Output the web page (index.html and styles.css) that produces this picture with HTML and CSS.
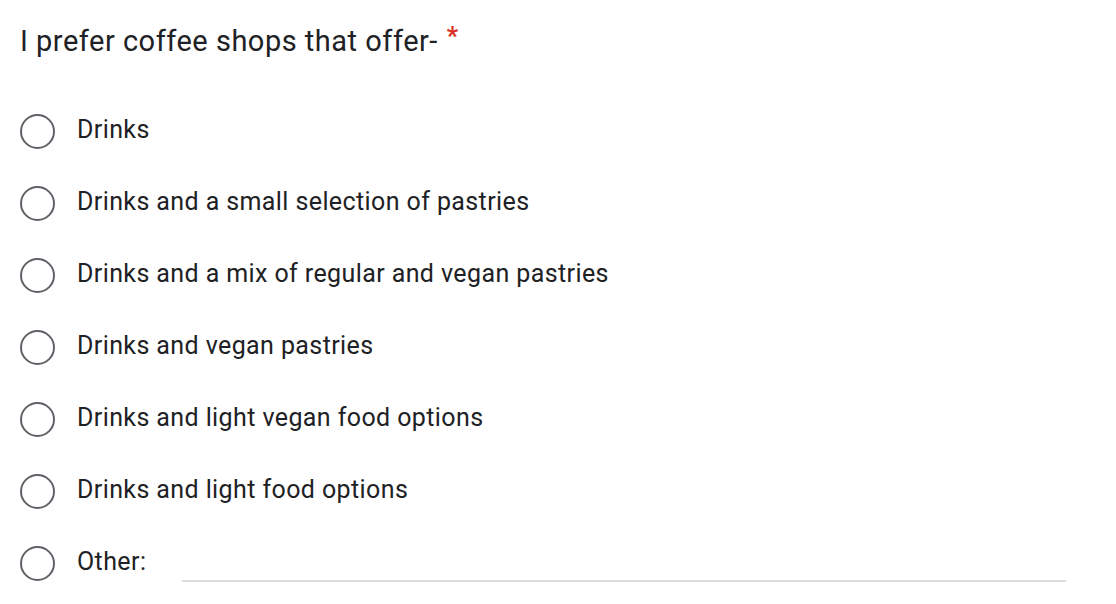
FILE: index.html
```html
<!DOCTYPE html>
<html>
<head>
<meta charset="utf-8">
<link rel="stylesheet" href="styles.css">
</head>
<body>
<div class="question">
  <div class="title">I prefer coffee shops that offer-<span class="req">*</span></div>
  <div class="options">
    <div class="option"><span class="radio"></span><span class="label">Drinks</span></div>
    <div class="option"><span class="radio"></span><span class="label">Drinks and a small selection of pastries</span></div>
    <div class="option"><span class="radio"></span><span class="label">Drinks and a mix of regular and vegan pastries</span></div>
    <div class="option"><span class="radio"></span><span class="label">Drinks and vegan pastries</span></div>
    <div class="option"><span class="radio"></span><span class="label">Drinks and light vegan food options</span></div>
    <div class="option"><span class="radio"></span><span class="label">Drinks and light food options</span></div>
    <div class="option other"><span class="radio"></span><span class="label">Other:</span><span class="other-input"></span></div>
  </div>
</div>
</body>
</html>
```
FILE: styles.css
```css
html, body {
  margin: 0;
  padding: 0;
  background: #ffffff;
}
body {
  width: 1116px;
  height: 604px;
  overflow: hidden;
}
.question {
  padding: 21px 50px 0 20px;
  color: #202124;
}
.title {
  font-family: Roboto, "Open Sans", sans-serif;
  font-size: 29px;
  line-height: 40px;
  letter-spacing: 0.5px;
  color: #202124;
}
.req {
  color: #d93025;
  font-size: 25px;
  font-weight: 700;
  margin-left: 9px;
  position: relative;
  top: -6px;
}
.options {
  margin-top: 32px;
  display: flex;
  flex-direction: column;
}
.option {
  height: 72px;
  display: flex;
  align-items: center;
}
.radio {
  box-sizing: border-box;
  width: 35px;
  height: 35px;
  border: 2.6px solid #5f6368;
  border-radius: 50%;
  flex: none;
}
.label {
  margin-left: 22px;
  margin-bottom: 4px;
  font-family: Roboto, sans-serif;
  font-size: 25px;
  letter-spacing: 0.4px;
  color: #202124;
}
.other-input {
  flex: none;
  width: 884px;
  height: 2px;
  background: #dadce0;
  margin-left: auto;
  align-self: flex-end;
  margin-bottom: 17px;
}
```
